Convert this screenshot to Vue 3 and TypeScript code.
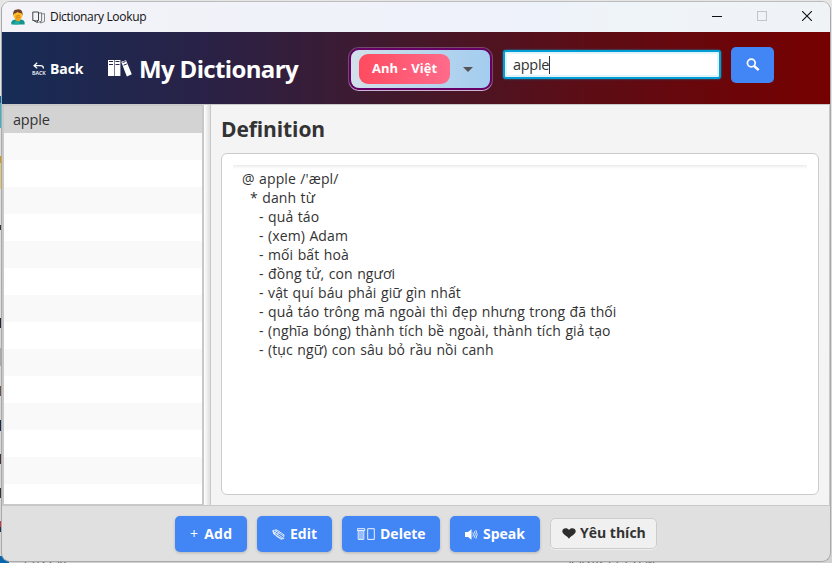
<script setup lang="ts">
import { ref } from 'vue'

const query = ref('apple')
const rows: string[] = ['apple', ...Array<string>(14).fill('')]
const definition: { text: string; level: number }[] = [
  { text: "@ apple /'æpl/", level: 0 },
  { text: '* danh từ', level: 1 },
  { text: '- quả táo', level: 2 },
  { text: '- (xem) Adam', level: 2 },
  { text: '- mối bất hoà', level: 2 },
  { text: '- đồng tử, con ngươi', level: 2 },
  { text: '- vật quí báu phải giữ gìn nhất', level: 2 },
  { text: '- quả táo trông mã ngoài thì đẹp nhưng trong đã thối', level: 2 },
  { text: '- (nghĩa bóng) thành tích bề ngoài, thành tích giả tạo', level: 2 },
  { text: '- (tục ngữ) con sâu bỏ rầu nồi canh', level: 2 },
]
</script>

<template>
  <div class="desktop">
    <div class="behind-left"></div>
    <span class="behind-text size">1512790</span>
    <span class="behind-text date">3/3/2023 1:15 PM</span>

    <div class="window">
      <div class="titlebar">
        <svg class="avatar" width="14" height="16" viewBox="0 0 14 16">
          <path d="M0.3 15.6V13.2Q1 10.8 4 10.6H10Q13 10.8 13.6 13.2V15.6Z" fill="#12968f" />
          <circle cx="6.9" cy="6" r="4.6" fill="#fbc02d" />
          <path d="M2.3 6.4Q1.3 .5 6.2 .4Q12 -.1 11.6 6.4L10.6 4.2Q8.2 4.4 6.3 3.1Q4.8 4.6 3.2 4.6Z" fill="#70402a" />
          <path d="M5 6.2L8.8 5.2L10.2 8.4L8.4 12.8L5 12.2L4.2 9Z" fill="#f5a31c" />
          <path d="M4.6 7.2L8.5 6.4M5 9L8.7 8.2" stroke="#cf7a10" stroke-width=".6" />
          <path d="M5 11.5L9 12.4L7.6 15.6H2.4Z" fill="#20aaa0" />
        </svg>
        <svg class="pages" width="14" height="13" viewBox="0 0 14 13" fill="#f2f3f9" stroke="#444" stroke-width="1">
          <path d="M8.5 3.2L12.5 2.6V10.6L8.5 12Z" stroke="#888" />
          <path d="M5.5 2.3L9.6 1.8V10.2L6.5 11.3H5.5Z" stroke="#777" />
          <path d="M.8 1H6.5V9.5H.8Z" />
          <path d="M2 9.8L5.3 11.5V9.5" />
        </svg>
        <span class="caption">Dictionary Lookup</span>
        <div class="controls">
          <svg width="10" height="10" viewBox="0 0 10 10"><path d="M0 5.5H10" stroke="#111" /></svg>
          <svg width="10" height="10" viewBox="0 0 10 10"><rect x=".5" y=".5" width="9" height="9" fill="none" stroke="#c2c4c8" /></svg>
          <svg width="10" height="10" viewBox="0 0 10 10"><path d="M0 0L10 10M10 0L0 10" stroke="#111" stroke-width="1.1" /></svg>
        </div>
      </div>

      <header class="header">
        <div class="back">
          <svg width="14" height="13" viewBox="0 0 14 13" fill="none" stroke="#fff">
            <path d="M5.2 .7L2 3.7L5.2 6.4M2 3.7H8.5Q11.5 3.7 11.5 6.5" stroke-width="1.2" />
            <text x="0" y="12.5" textLength="13.5" lengthAdjust="spacingAndGlyphs" class="tiny">BACK</text>
          </svg>
          <span>Back</span>
        </div>
        <svg class="books" width="24" height="17" viewBox="0 0 24 17">
          <path d="M0 0H6V16H0ZM6.6 0H12.4V16H6.6Z" fill="#fff" />
          <path d="M13.2 1.8L18 .2L23.8 14.2L18.8 16.6Z" fill="#fff" />
          <path d="M1 1.5H5M1 4.5H5M7.5 1.5H11.5M7.5 4.5H11.5M14.6 2.5L17.6 1.5M15.6 5.2L18.9 3.9" stroke="#27234a" stroke-width="1" />
        </svg>
        <h1>My Dictionary</h1>
        <div class="combo">
          <span class="choice">Anh - Việt</span>
          <i class="arrow"></i>
        </div>
        <div class="search"><span>{{ query }}</span><i class="caret"></i></div>
        <div class="go">
          <svg width="14" height="14" viewBox="0 0 14 14" fill="none" stroke="#fff">
            <circle cx="5.3" cy="5" r="3.9" stroke-width="1.7" />
            <path d="M8 7.8L12.7 12.2" stroke-width="2.5" />
          </svg>
        </div>
      </header>

      <main class="main">
        <div class="list">
          <div v-for="(row, i) in rows" :key="i" class="row" :class="{ selected: i === 0 }">{{ row }}</div>
        </div>
        <div class="divider"></div>
        <section class="detail">
          <h2>Definition</h2>
          <div class="card">
            <div class="rule"></div>
            <p v-for="(line, i) in definition" :key="i" :class="'l' + line.level">{{ line.text }}</p>
          </div>
        </section>
      </main>

      <footer class="footer">
        <div class="btn add"><span class="plus">+</span><span>Add</span></div>
        <div class="btn edit">
          <svg width="13" height="11" viewBox="0 0 13 11" fill="none" stroke="#fff" stroke-width=".8">
            <path d="M.8 1.6L4.6 .8L12 5.8Q12.6 8 9.8 9.6L1.8 5.2ZM.8 1.6L3.4 5.8M2 3L10.5 8.6M3 1.4L11.8 7.2M4 6.8L9 10.2L12.2 9.4M5.2 1.2L2.4 4.6M7.2 2.6L4.6 6.6" />
          </svg>
          <span>Edit</span>
        </div>
        <div class="btn delete">
          <svg width="19" height="12" viewBox="0 0 19 12" fill="none" stroke="#fff" stroke-width=".9">
            <path d="M.3 .7H7.7V2.5H.3ZM1.2 2.5V11.4H6.8V2.5M3 3V11M5 3V11M10.7 .7H17.3V11.4H10.7Z" />
          </svg>
          <span>Delete</span>
        </div>
        <div class="btn speak">
          <svg width="13" height="11" viewBox="0 0 13 11" fill="none" stroke="#fff">
            <path d="M0 3H3L6.5 .3V10.7L3 8H0Z" fill="#fff" stroke="none" />
            <path d="M7.8 3.5Q9 5.5 7.8 7.5M9.3 2.2Q11.2 5.5 9.3 8.8M10.8 1.2Q13.5 5.5 10.8 9.8" stroke-width=".8" />
          </svg>
          <span>Speak</span>
        </div>
        <div class="btn favorite">
          <svg width="14" height="11" viewBox="0 0 14 11"><path d="M7 2.1C5.6-.5.3-.3.3 3.3C.3 6.4 4.7 7.4 7 10.8C9.3 7.4 13.7 6.4 13.7 3.3C13.7-.3 8.4-.5 7 2.1Z" fill="#2d2d2d" /></svg>
          <span>Yêu thích</span>
        </div>
      </footer>
    </div>
  </div>
</template>

<style>
body {
  background: #e3e3e3;
  overflow: hidden;
}
</style>

<style scoped>
* {
  box-sizing: border-box;
}
.desktop {
  position: relative;
  width: 832px;
  height: 563px;
  padding: 1px;
  overflow: hidden;
  background: linear-gradient(#e6e6e6, #d2d2d2);
  font-family: "Open Sans", "Noto Sans", sans-serif;
  color: #333;
}
.behind-left {
  position: absolute;
  left: 0;
  top: 0;
  width: 9px;
  height: 563px;
  background: linear-gradient(#e6e6e6 0 96px, #0865b0 96px 103px, #2eb6cf 103px 128px, #dedede 128px 156px, #d49a0b 156px 163px, #eac76b 163px 189px, #dedede 189px 225px, #333 225px 230px, #dedede 230px 318px, #222531 318px 328px, #d6d6d6 328px 348px, #aaa 348px 366px, #d6d6d6 366px 386px, #69534c 386px 396px, #d6d6d6 396px 420px, #14284e 420px 431px, #d6d6d6 431px 454px, #403435 454px 464px, #d6d6d6 464px 488px, #333 488px 498px, #d6d6d6 498px 521px, #c5384c 521px 527px, #20345b 527px 532px, #d6d6d6 532px 556px, #0766ae 556px);
}
.behind-text {
  position: absolute;
  top: 553px;
  font-size: 11px;
  line-height: 16px;
  color: #555;
}
.size {
  left: 22px;
}
.date {
  left: 565px;
}
.window {
  position: relative;
  display: flex;
  flex-direction: column;
  width: 830px;
  height: 561px;
  border: 1px solid #a9a9a9;
  border-top-color: #bcbcbc;
  border-radius: 9px;
  overflow: hidden;
  background: #e0e0e0;
}
.titlebar {
  display: flex;
  align-items: center;
  flex: none;
  height: 30px;
  padding: 0 18px 0 9px;
  background: linear-gradient(90deg, #f3f3f8, #eef2fb 65%, #eff4f8 75%, #eff3f6);
}
.pages {
  margin-left: 7px;
}
.caption {
  margin: -1px 0 0 4px;
  font-size: 12px;
  letter-spacing: -0.33px;
  color: #111;
}
.controls {
  display: flex;
  gap: 35px;
  margin: -2px 0 0 auto;
}
.header {
  display: flex;
  flex: none;
  height: 72px;
  padding-left: 30px;
  background: linear-gradient(90deg, #162c56, #2a2146 25%, #441829 50%, #5c0d16 70%, #760000);
  color: #fff;
}
.back {
  display: flex;
  align-items: center;
  gap: 4px;
  width: 76px;
  font-size: 14px;
  font-weight: 700;
  letter-spacing: -0.1px;
}
.tiny {
  font-size: 6px;
  font-weight: 600;
  fill: #fff;
  stroke: none;
}
.books {
  align-self: center;
}
h1 {
  width: 210px;
  margin: 0 0 0 7px;
  font-size: 24px;
  line-height: 73px;
  letter-spacing: -0.65px;
  white-space: nowrap;
}
.combo {
  display: flex;
  align-items: center;
  flex: none;
  width: 143px;
  height: 42px;
  margin-top: 16px;
  padding-left: 8px;
  border: 2px solid #660066;
  border-radius: 10px;
  background: linear-gradient(90deg, #d2e0ea, #a3cdef);
  box-shadow: 0 1px 0 #cfb5d4, 0 0 0 1px rgba(190, 150, 200, 0.4);
}
.choice {
  width: 91px;
  border-radius: 9px;
  background: linear-gradient(90deg, #ff4b60, #ff6b8b);
  font-size: 13px;
  font-weight: 700;
  line-height: 29px;
  height: 30px;
  letter-spacing: 0;
  word-spacing: 1.2px;
  text-align: center;
}
.arrow {
  margin-left: 13px;
  border: 5px solid transparent;
  border-top-color: #555;
  border-bottom: 0;
}
.search {
  display: flex;
  align-items: center;
  width: 218px;
  height: 29px;
  margin: 18px 0 0 11px;
  padding-left: 8px;
  border: 2px solid #039ed3;
  border-radius: 3px;
  background: #fff;
  box-shadow: inset 0 0 0 2px #def3fa, 0 0 2px #039ed3;
  font-size: 14.5px;
  letter-spacing: -0.3px;
  color: #333;
}
.caret {
  width: 1px;
  height: 18px;
  background: #333;
}
.go {
  display: grid;
  place-items: center;
  width: 43px;
  height: 36px;
  margin: 15px 0 0 10px;
  border-radius: 5px;
  background: #4285f4;
}
.main {
  display: flex;
  flex: none;
  height: 402px;
  border-top: 1px solid #c8c8c8;
  border-bottom: 1px solid #c8c8c8;
}
.list {
  width: 202px;
  border: 2px solid #c8c8c8;
  border-top-width: 1px;
  border-bottom-width: 1px;
  overflow: hidden;
  background: #fff;
}
.row {
  height: 27px;
  padding-left: 9px;
  font-size: 14.5px;
  line-height: 27px;
  letter-spacing: -0.2px;
}
.row:nth-child(even) {
  background: #f9f9f9;
}
.row.selected {
  background: #d3d3d3;
}
.divider {
  width: 7px;
  border-right: 1px solid #c8c8c8;
  background: linear-gradient(90deg, #fff, #dedede);
}
.detail {
  flex: 1;
  padding: 10px 10px 10px 10px;
  border-right: 1px solid #c8c8c8;
  background: #f4f4f4;
}
h2 {
  height: 38px;
  margin: 0;
  font-size: 21px;
  line-height: 29px;
  letter-spacing: -0.1px;
}
.card {
  height: 342px;
  padding: 11px;
  border: 1px solid #ccc;
  border-radius: 6px;
  background: #fff;
}
.rule {
  height: 4px;
  background: linear-gradient(#ececec, #fff);
}
p {
  margin: 0;
  font-size: 14px;
  line-height: 19px;
  letter-spacing: 0.1px;
  word-spacing: 0.7px;
  white-space: nowrap;
}
.l0 {
  padding-left: 9px;
}
.l1 {
  padding-left: 17px;
}
.l2 {
  padding-left: 26px;
}
.footer {
  display: flex;
  align-items: flex-start;
  flex: 1;
  gap: 10px;
  padding: 10px 0 0 173px;
}
.btn {
  display: flex;
  align-items: center;
  height: 36px;
  padding-left: 15px;
  gap: 5px;
  border-radius: 5px;
  background: #4285f4;
  box-shadow: 0 1px 3px rgba(0, 0, 0, 0.2);
  font-size: 14px;
  font-weight: 700;
  line-height: 18px;
  letter-spacing: 0;
  white-space: nowrap;
  color: #fff;
}
.btn span {
  margin-top: -1px;
}
.plus {
  font-weight: 400;
}
.add {
  width: 72px;
  gap: 6px;
  letter-spacing: 0.2px;
}
.edit {
  width: 75px;
}
.delete {
  width: 98px;
  gap: 4px;
}
.speak {
  width: 90px;
}
.favorite {
  width: 107px;
  height: 31px;
  margin-top: 2px;
  padding-left: 11px;
  gap: 4px;
  border: 1px solid #ccc;
  background: #f0f0f0;
  box-shadow: 0 1px 0 #eee;
  color: #333;
}
</style>
